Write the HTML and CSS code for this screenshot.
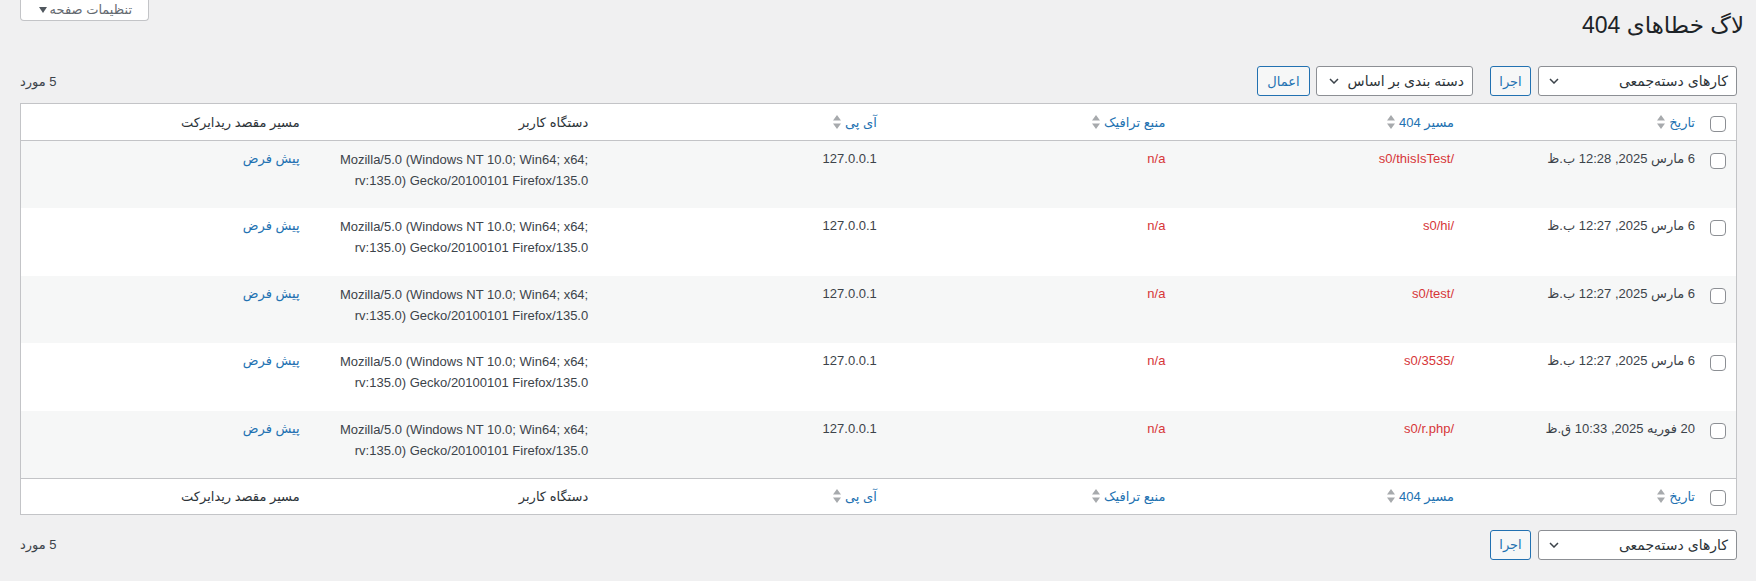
FILE: index.html
```html
<!DOCTYPE html>
<html lang="fa" dir="rtl">
<head>
<meta charset="utf-8">
<title>لاگ خطاهای 404</title>
<link rel="stylesheet" href="styles.css">
</head>
<body>
<div class="wrap">
  <div class="top">
    <h1 class="title">لاگ خطاهای 404</h1>
    <button class="screen-opt">تنظیمات صفحه <svg class="tri" width="8" height="6" viewBox="0 0 8 6"><path d="M0 0H8L4 6Z" fill="#50575e"/></svg></button>
  </div>

  <div class="tablenav">
    <div class="actions first">
      <div class="select w-bulk"><span>کارهای دسته&zwnj;جمعی</span><svg class="chev" width="10" height="6" viewBox="0 0 10 6"><path d="M1 1L5 5L9 1" fill="none" stroke="#3c434a" stroke-width="1.5"/></svg></div>
      <button class="btn w-run">اجرا</button>
    </div>
    <div class="actions">
      <div class="select w-cat"><span>دسته بندی بر اساس</span><svg class="chev" width="10" height="6" viewBox="0 0 10 6"><path d="M1 1L5 5L9 1" fill="none" stroke="#3c434a" stroke-width="1.5"/></svg></div>
      <button class="btn w-apply">اعمال</button>
    </div>
    <div class="num">5 مورد</div>
  </div>

  <table class="list">
    <colgroup>
      <col class="c-cb"><col class="c-date"><col><col><col><col><col>
    </colgroup>
    <thead>
      <tr>
        <th class="cb"><div class="hc"><input type="checkbox" class="chk"></div></th>
        <th><div class="hc"><a class="sort">تاریخ</a><svg class="arrows" width="8" height="14" viewBox="0 0 8 14"><path d="M4 0L8 5.5H0Z M0 8.5H8L4 14Z" fill="#a7aaad"/></svg></div></th>
        <th><div class="hc"><a class="sort">مسیر 404</a><svg class="arrows" width="8" height="14" viewBox="0 0 8 14"><path d="M4 0L8 5.5H0Z M0 8.5H8L4 14Z" fill="#a7aaad"/></svg></div></th>
        <th><div class="hc"><a class="sort">منبع ترافیک</a><svg class="arrows" width="8" height="14" viewBox="0 0 8 14"><path d="M4 0L8 5.5H0Z M0 8.5H8L4 14Z" fill="#a7aaad"/></svg></div></th>
        <th><div class="hc"><a class="sort">آی پی</a><svg class="arrows" width="8" height="14" viewBox="0 0 8 14"><path d="M4 0L8 5.5H0Z M0 8.5H8L4 14Z" fill="#a7aaad"/></svg></div></th>
        <th><div class="hc">دستگاه کاربر</div></th>
        <th><div class="hc">مسیر مقصد ریدایرکت</div></th>
      </tr>
    </thead>
    <tbody>
      <tr class="alt">
        <td class="cb"><div class="cc"><input type="checkbox" class="chk"></div></td>
        <td><div class="dc">6 مارس 2025, 12:28 ب.ظ</div></td>
        <td><div class="dc red">/s0/thisIsTest</div></td>
        <td><div class="dc red">n/a</div></td>
        <td><div class="dc">127.0.0.1</div></td>
        <td><div class="dc ua"><span dir="ltr">Mozilla/5.0 (Windows NT 10.0; Win64; x64; rv:135.0) Gecko/20100101 Firefox/135.0</span></div></td>
        <td><div class="dc"><a class="link">پیش فرض</a></div></td>
      </tr>
      <tr>
        <td class="cb"><div class="cc"><input type="checkbox" class="chk"></div></td>
        <td><div class="dc">6 مارس 2025, 12:27 ب.ظ</div></td>
        <td><div class="dc red">/s0/hi</div></td>
        <td><div class="dc red">n/a</div></td>
        <td><div class="dc">127.0.0.1</div></td>
        <td><div class="dc ua"><span dir="ltr">Mozilla/5.0 (Windows NT 10.0; Win64; x64; rv:135.0) Gecko/20100101 Firefox/135.0</span></div></td>
        <td><div class="dc"><a class="link">پیش فرض</a></div></td>
      </tr>
      <tr class="alt">
        <td class="cb"><div class="cc"><input type="checkbox" class="chk"></div></td>
        <td><div class="dc">6 مارس 2025, 12:27 ب.ظ</div></td>
        <td><div class="dc red">/s0/test</div></td>
        <td><div class="dc red">n/a</div></td>
        <td><div class="dc">127.0.0.1</div></td>
        <td><div class="dc ua"><span dir="ltr">Mozilla/5.0 (Windows NT 10.0; Win64; x64; rv:135.0) Gecko/20100101 Firefox/135.0</span></div></td>
        <td><div class="dc"><a class="link">پیش فرض</a></div></td>
      </tr>
      <tr>
        <td class="cb"><div class="cc"><input type="checkbox" class="chk"></div></td>
        <td><div class="dc">6 مارس 2025, 12:27 ب.ظ</div></td>
        <td><div class="dc red">/s0/3535</div></td>
        <td><div class="dc red">n/a</div></td>
        <td><div class="dc">127.0.0.1</div></td>
        <td><div class="dc ua"><span dir="ltr">Mozilla/5.0 (Windows NT 10.0; Win64; x64; rv:135.0) Gecko/20100101 Firefox/135.0</span></div></td>
        <td><div class="dc"><a class="link">پیش فرض</a></div></td>
      </tr>
      <tr class="alt">
        <td class="cb"><div class="cc"><input type="checkbox" class="chk"></div></td>
        <td><div class="dc">20 فوریه 2025, 10:33 ق.ظ</div></td>
        <td><div class="dc red">/s0/r.php</div></td>
        <td><div class="dc red">n/a</div></td>
        <td><div class="dc">127.0.0.1</div></td>
        <td><div class="dc ua"><span dir="ltr">Mozilla/5.0 (Windows NT 10.0; Win64; x64; rv:135.0) Gecko/20100101 Firefox/135.0</span></div></td>
        <td><div class="dc"><a class="link">پیش فرض</a></div></td>
      </tr>
    </tbody>
    <tfoot>
      <tr>
        <th class="cb"><div class="fc"><input type="checkbox" class="chk"></div></th>
        <th><div class="fc"><a class="sort">تاریخ</a><svg class="arrows" width="8" height="14" viewBox="0 0 8 14"><path d="M4 0L8 5.5H0Z M0 8.5H8L4 14Z" fill="#a7aaad"/></svg></div></th>
        <th><div class="fc"><a class="sort">مسیر 404</a><svg class="arrows" width="8" height="14" viewBox="0 0 8 14"><path d="M4 0L8 5.5H0Z M0 8.5H8L4 14Z" fill="#a7aaad"/></svg></div></th>
        <th><div class="fc"><a class="sort">منبع ترافیک</a><svg class="arrows" width="8" height="14" viewBox="0 0 8 14"><path d="M4 0L8 5.5H0Z M0 8.5H8L4 14Z" fill="#a7aaad"/></svg></div></th>
        <th><div class="fc"><a class="sort">آی پی</a><svg class="arrows" width="8" height="14" viewBox="0 0 8 14"><path d="M4 0L8 5.5H0Z M0 8.5H8L4 14Z" fill="#a7aaad"/></svg></div></th>
        <th><div class="fc">دستگاه کاربر</div></th>
        <th><div class="fc">مسیر مقصد ریدایرکت</div></th>
      </tr>
    </tfoot>
  </table>

  <div class="tablenav bottom">
    <div class="actions first">
      <div class="select w-bulk"><span>کارهای دسته&zwnj;جمعی</span><svg class="chev" width="10" height="6" viewBox="0 0 10 6"><path d="M1 1L5 5L9 1" fill="none" stroke="#3c434a" stroke-width="1.5"/></svg></div>
      <button class="btn w-run">اجرا</button>
    </div>
    <div class="num">5 مورد</div>
  </div>
</div>
</body>
</html>
```
FILE: styles.css
```css
html, body {
  margin: 0;
  padding: 0;
}
body {
  background: #f0f0f1;
  font-family: "Liberation Sans", "DejaVu Sans", sans-serif;
  font-size: 13px;
  color: #3c434a;
}
.wrap {
  padding: 0 19px 0 20px;
}

/* header */
.top {
  display: flex;
  justify-content: space-between;
  align-items: flex-start;
  height: 40px;
}
.title {
  margin: 10px -7px 0 0;
  font-size: 23px;
  font-weight: 400;
  line-height: 30px;
  color: #1d2327;
}
.screen-opt {
  box-sizing: border-box;
  width: 129px;
  height: 21px;
  margin: 0;
  padding: 0 16px 1px 18px;
  border: 1px solid #c3c4c7;
  border-top: 0;
  border-radius: 0 0 4px 4px;
  background: #fff;
  color: #646970;
  font-family: inherit;
  font-size: 13px;
  line-height: 16px;
  display: flex;
  align-items: center;
  justify-content: space-between;
}
.tri {
  display: block;
  margin-top: 1px;
}

/* toolbars */
.tablenav {
  display: flex;
  align-items: center;
  height: 30px;
  margin-top: 26px;
}
.tablenav.bottom {
  margin-top: 15px;
}
.actions {
  display: flex;
  align-items: center;
  gap: 6px;
}
.actions.first {
  gap: 7px;
  margin-left: 17px;
}
.select {
  box-sizing: border-box;
  height: 30px;
  border: 1px solid #8c8f94;
  border-radius: 3px;
  background: #fff;
  color: #2c3338;
  font-size: 14px;
  display: flex;
  align-items: center;
  justify-content: space-between;
  padding: 0 8px 0 10px;
  white-space: nowrap;
  overflow: hidden;
}
.chev {
  display: block;
  flex: none;
}
.w-bulk { width: 199px; }
.w-cat { width: 157px; padding-left: 12px; }
.btn {
  box-sizing: border-box;
  height: 30px;
  margin: 0;
  padding: 0;
  border: 1px solid #2271b1;
  border-radius: 3px;
  background: #f6f7f7;
  color: #2271b1;
  font-family: inherit;
  font-size: 13px;
}
.w-run { width: 41px; }
.w-apply { width: 53px; }
.num {
  margin-right: auto;
  color: #3c434a;
  font-size: 13px;
}

/* table */
.list {
  width: 100%;
  table-layout: fixed;
  border-spacing: 0;
  border: 1px solid #c3c4c7;
  background: #fff;
  margin-top: 7px;
}
.c-cb { width: 31px; }
.c-date { width: 241px; }
.list th, .list td {
  padding: 0 10px;
  text-align: right;
  font-weight: 400;
  vertical-align: top;
}
.list th.cb, .list td.cb {
  padding: 0 10px 0 0;
}
.list thead th {
  border-bottom: 1px solid #c3c4c7;
}
.list tfoot th {
  border-top: 1px solid #c3c4c7;
}
.hc, .fc {
  display: flex;
  align-items: center;
  gap: 4px;
  color: #2c3338;
  font-size: 13px;
}
.hc { height: 36px; }
.fc { height: 35px; }
.sort {
  color: #2271b1;
}
.arrows {
  display: block;
  flex: none;
}
.chk {
  appearance: none;
  -webkit-appearance: none;
  box-sizing: border-box;
  width: 16px;
  height: 16px;
  margin: 0;
  border: 1px solid #8c8f94;
  border-radius: 4px;
  background: #fff;
  display: block;
}
.hc .chk, .fc .chk {
  margin-top: 4px;
}
.list tbody td {
  height: 67.4px;
}
.list tbody tr.alt td {
  background: #f6f7f7;
}
.cc {
  padding-top: 12px;
}
.dc {
  padding-top: 8px;
  line-height: 20px;
  font-size: 13px;
  color: #3c434a;
}
.dc.ua {
  line-height: 21px;
}
.red {
  color: #d63638;
}
.link {
  color: #2271b1;
}
```
